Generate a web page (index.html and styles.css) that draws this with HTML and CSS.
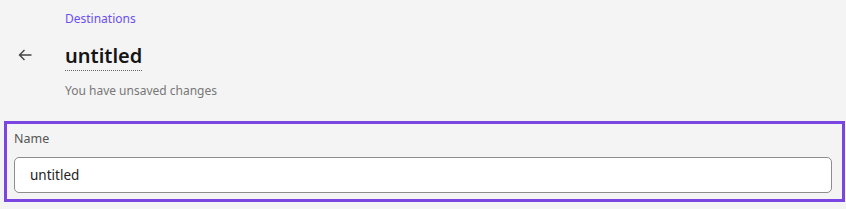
FILE: index.html
```html
<!DOCTYPE html>
<html lang="en">
<head>
  <meta charset="UTF-8" />
  <title>untitled</title>
  <link rel="stylesheet" href="styles.css">
</head>
<body>
  <header class="page-header">
    <div class="back">
      <svg width="14" height="12" viewBox="0 0 14 12" fill="none" stroke="#444" stroke-width="1.4">
        <path d="M13.5 6H1.5M6.5 1L1.5 6l5 5"/>
      </svg>
    </div>
    <div class="titles">
      <a class="crumb" href="#">Destinations</a>
      <h1 class="title">untitled</h1>
      <p class="status">You have unsaved changes</p>
    </div>
  </header>

  <section class="field-frame">
    <label class="field-label" for="name">Name</label>
    <input id="name" class="field-input" type="text" value="untitled">
  </section>
</body>
</html>
```

FILE: styles.css
```css
body {
  margin: 0;
  background: #f4f4f4;
  font-family: "Noto Sans", "Open Sans", sans-serif;
  color: #222;
}

.page-header {
  display: flex;
  align-items: flex-start;
  padding: 10px 0 0 18px;
  height: 111px;
  box-sizing: border-box;
}

.back {
  width: 47px;
  padding-top: 39px;
  line-height: 0;
}

.titles {
  display: flex;
  flex-direction: column;
}

.crumb {
  font-size: 12px;
  line-height: 18px;
  color: #6a4ff0;
  text-decoration: none;
}

.title {
  margin: 14px 0 0;
  font-size: 20px;
  font-weight: 600;
  line-height: 28px;
  color: #151515;
  align-self: flex-start;
  border-bottom: 1px dotted #666;
}

.status {
  margin: 11px 0 0;
  font-size: 12px;
  line-height: 18px;
  color: #777;
}

.field-frame {
  margin: 10px 1px 0 4px;
  border: 3px solid #7a45e0;
  padding: 6px 10px 6px 7px;
  display: flex;
  flex-direction: column;
}

.field-label {
  font-size: 12.5px;
  line-height: 18px;
  color: #555;
  margin-bottom: 9px;
}

.field-input {
  height: 36px;
  box-sizing: border-box;
  border: 1px solid #8d8d8d;
  border-radius: 5px;
  background: #fff;
  padding: 0 15px;
  font: inherit;
  font-size: 13.5px;
  color: #222;
}
```
